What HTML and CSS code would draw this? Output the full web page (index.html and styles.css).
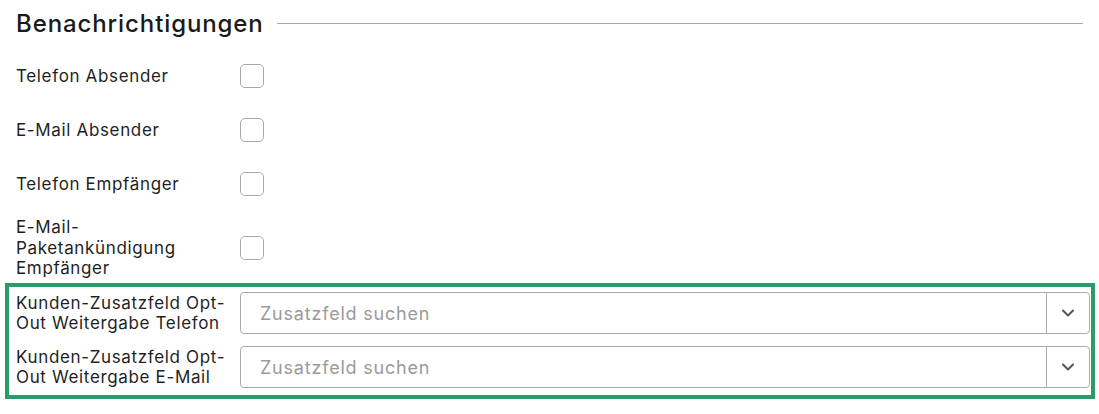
FILE: index.html
```html
<!DOCTYPE html>
<html lang="de">
<head>
  <meta charset="UTF-8" />
  <meta name="viewport" content="width=device-width, initial-scale=1.0" />
  <title>Benachrichtigungen</title>
  <link rel="stylesheet" href="styles.css">
</head>
<body>
  <section class="settings">
    <div class="section-head">
      <h2>Benachrichtigungen</h2>
      <span class="rule"></span>
    </div>

    <div class="row">
      <label class="row-label" for="telAbs">Telefon Absender</label>
      <input class="check" type="checkbox" id="telAbs" />
    </div>
    <div class="row">
      <label class="row-label" for="mailAbs">E-Mail Absender</label>
      <input class="check" type="checkbox" id="mailAbs" />
    </div>
    <div class="row">
      <label class="row-label" for="telEmp">Telefon Empfänger</label>
      <input class="check" type="checkbox" id="telEmp" />
    </div>
    <div class="row row-tall">
      <label class="row-label" for="mailPaket">E-Mail-Paketankündigung Empfänger</label>
      <input class="check" type="checkbox" id="mailPaket" />
    </div>

    <div class="highlight">
      <div class="row row-select">
        <label class="row-label">Kunden-Zusatzfeld Opt-Out Weitergabe Telefon</label>
        <div class="select">
          <span class="placeholder">Zusatzfeld suchen</span>
          <span class="select-btn">
            <svg width="12" height="8" viewBox="0 0 12 8"><path d="M1 1.5 L6 6.5 L11 1.5" fill="none" stroke="#555" stroke-width="2" stroke-linecap="round" stroke-linejoin="round"/></svg>
          </span>
        </div>
      </div>
      <div class="row row-select">
        <label class="row-label">Kunden-Zusatzfeld Opt-Out Weitergabe E-Mail</label>
        <div class="select">
          <span class="placeholder">Zusatzfeld suchen</span>
          <span class="select-btn">
            <svg width="12" height="8" viewBox="0 0 12 8"><path d="M1 1.5 L6 6.5 L11 1.5" fill="none" stroke="#555" stroke-width="2" stroke-linecap="round" stroke-linejoin="round"/></svg>
          </span>
        </div>
      </div>
    </div>
  </section>
</body>
</html>
```

FILE: styles.css
```css
body {
  margin: 0;
  font-family: Inter, 'Noto Sans', sans-serif;
  color: #1f1f1f;
  background: #fff;
}
.settings {
  padding: 0 9px 0 16px;
}
.section-head {
  display: flex;
  align-items: center;
  height: 49px;
}
.section-head h2 {
  margin: 0;
  font-size: 24px;
  font-weight: 500;
  letter-spacing: 0.9px;
  color: #1a1a1a;
  padding-bottom: 3px;
}
.rule {
  flex: 1;
  height: 1px;
  background: #aaa;
  margin: 0 7px 2px 13px;
}
.row {
  display: flex;
  align-items: center;
  min-height: 54px;
}
.row-tall {
  min-height: 74px;
}
.row-label {
  width: 214px;
  margin-right: 10px;
  font-size: 17px;
  letter-spacing: 0.65px;
  line-height: 20.5px;
}
.check {
  appearance: none;
  margin: 0;
  width: 24px;
  height: 24px;
  border: 1px solid #a9a9a9;
  border-radius: 5px;
  background: #fff;
}
.highlight {
  border: 4px solid #2a9b69;
  margin: -2px -5px 0 -11px;
  padding: 5px 1px 7px 7px;
  display: flex;
  flex-direction: column;
  gap: 12px;
}
.row-select {
  min-height: 0;
}
.select {
  flex: 1;
  display: flex;
  height: 42px;
  border: 1px solid #aaa;
  border-radius: 4px;
  box-sizing: border-box;
}
.placeholder {
  flex: 1;
  display: flex;
  align-items: center;
  padding-left: 19px;
  font-size: 18px;
  letter-spacing: 0.8px;
  color: #9a9a9a;
}
.select-btn {
  width: 42px;
  border-left: 1px solid #aaa;
  display: flex;
  align-items: center;
  justify-content: center;
}
```
